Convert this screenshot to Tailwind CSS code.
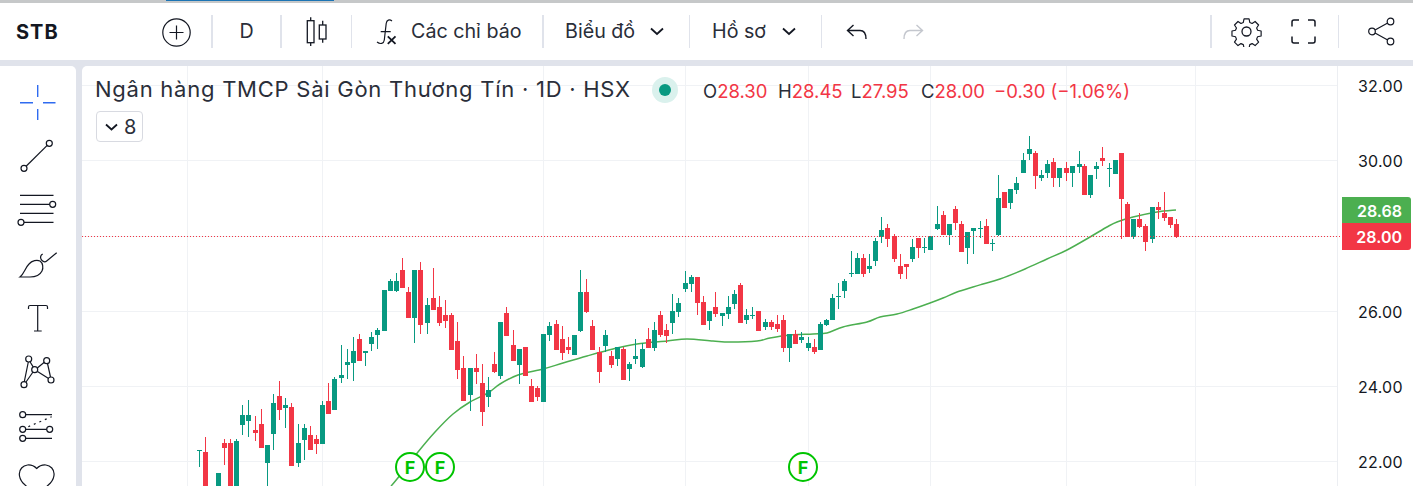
<!DOCTYPE html>
<html lang="vi">
<head>
<meta charset="utf-8">
<script src="https://cdn.jsdelivr.net/npm/@tailwindcss/browser@4"></script>
</head>
<body class="bg-white">
<div class="w-[1413px] h-[486px] overflow-hidden flex flex-col bg-[#e0e3eb] font-['Inter',sans-serif] text-[#131722]">
  <div class="h-[3px] shrink-0 bg-[#c6c8c9] flex items-start pl-[166px]"><div class="w-[168px] h-[1px] bg-[#1c74b4]"></div></div>

  <header class="h-[57px] shrink-0 bg-white flex items-center text-[19.7px] text-[#2a2e39]">
    <div class="w-[162px] pl-[16px] font-bold text-[20px] tracking-[1px] text-[#131722]">STB</div>
    <svg class="w-[29px] h-[29px] mt-[2px]" viewBox="0 0 29 29" fill="none" stroke="#131722" stroke-width="1.2"><circle cx="14.5" cy="14.5" r="13.7"/><path d="M14.5 7.5v14M7.5 14.5h14"/></svg>
    <div class="w-[2px] h-[33px] bg-[#e0e3eb] ml-[20px]"></div>
    <div class="w-[67px] text-center">D</div>
    <div class="w-[2px] h-[33px] bg-[#e0e3eb]"></div>
    <svg class="w-[22px] h-[30px] ml-[24px]" viewBox="0 0 22 30" fill="none" stroke="#131722" stroke-width="1.3"><path d="M4.700 .3v3.400M4.700 25.700V29M16.700 3.700V8M16.700 22v3.700"/><rect x="1.300" y="3.700" width="6.700" height="22"/><rect x="13.300" y="8" width="6.700" height="14"/></svg>
    <div class="w-[1px] h-[33px] bg-[#e0e3eb] ml-[23px]"></div>
    <svg class="w-[21px] h-[28px] ml-[24px]" viewBox="0 0 21 28" fill="none" stroke="#131722" stroke-width="1.200"><path d="M16 3C13.500 1 10.700 1.800 10.200 5.500L8.300 22c-.5 3.800-4 4.500-7.300 2M4.700 13.700h10"/><path d="M11.800 18.300l7.700 7.500M19.500 18.300l-7.700 7.500" stroke-width="1.800"/></svg>
    <div class="ml-[14px] w-[131px]">Các chỉ báo</div>
    <div class="w-[2px] h-[33px] bg-[#e0e3eb]"></div>
    <div class="ml-[21px] w-[85px]">Biểu đồ</div>
    <svg class="w-[14px] h-[9px]" viewBox="0 0 14 9" fill="none" stroke="#131722" stroke-width="1.800"><path d="M1 1.500l6 5.500 6-5.500"/></svg>
    <div class="w-[1px] h-[33px] bg-[#e0e3eb] ml-[25px]"></div>
    <div class="ml-[22px] w-[70px]">Hồ sơ</div>
    <svg class="w-[14px] h-[9px]" viewBox="0 0 14 9" fill="none" stroke="#131722" stroke-width="1.800"><path d="M1 1.500l6 5.500 6-5.500"/></svg>
    <div class="w-[1px] h-[33px] bg-[#e0e3eb] ml-[25px]"></div>
    <svg class="w-[21px] h-[16px] ml-[24px]" viewBox="0 0 21 16" fill="none" stroke="#131722" stroke-width="1.400"><path d="M7.500 1L1.500 6.500l6 5.500M1.500 6.500H14c3.500 0 6 2.500 6 8.500"/></svg>
    <svg class="w-[21px] h-[16px] ml-[36px]" viewBox="0 0 21 16" fill="none" stroke="#c4c7ce" stroke-width="1.400"><path d="M13.500 1l6 5.500-6 5.500M19.500 6.500H7c-3.500 0-6 2.500-6 8.500"/></svg>
    <div class="w-[2px] h-[33px] bg-[#e0e3eb] ml-[286px]"></div>
    <svg class="w-[31px] h-[31px] ml-[19px]" viewBox="0 0 31 31" fill="none" stroke="#131722" stroke-width="1.300"><circle cx="15.500" cy="15.500" r="4.500"/><path d="M12.700 1.500h5.600l.8 3.900 2.600 1.100 3.300-2.200 3.900 3.900-2.200 3.300 1.100 2.600 3.900.8v5.600l-3.900.8-1.100 2.600 2.200 3.300-3.900 3.900-3.300-2.200-2.600 1.100-.8 3.900h-5.600l-.8-3.900-2.600-1.100-3.300 2.200-3.900-3.900 2.200-3.300-1.100-2.600-3.900-.8v-5.600l3.900-.8 1.100-2.600-2.200-3.300 3.900-3.900 3.300 2.200 2.600-1.100z" transform="translate(1.600 1.600) scale(.9)" stroke-linejoin="round"/></svg>
    <svg class="w-[25px] h-[25px] ml-[29px]" viewBox="0 0 25 25" fill="none" stroke="#131722" stroke-width="1.500"><path d="M1 7.500V3a2 2 0 0 1 2-2h5M17 1h5a2 2 0 0 1 2 2v4.500M24 17.500V22a2 2 0 0 1-2 2h-5M8 24H3a2 2 0 0 1-2-2v-4.500"/></svg>
    <div class="w-[1px] h-[33px] bg-[#e0e3eb] ml-[22px]"></div>
    <svg class="w-[27px] h-[29px] ml-[29px]" viewBox="0 0 27 29" fill="none" stroke="#131722" stroke-width="1.200"><circle cx="4" cy="14.500" r="3.300"/><circle cx="22.500" cy="4.500" r="3.300"/><circle cx="22.500" cy="24.500" r="3.300"/><path d="M7 13l12.700-7M7 16l12.700 7"/></svg>
  </header>

  <div class="h-[6px] shrink-0"></div>

  <main class="flex flex-1 gap-[6px] min-h-0">
    <aside class="w-[76px] shrink-0 bg-white rounded-tr-[5px] pt-[9px] flex flex-col">
      <svg class="w-[76px] h-[54px] shrink-0" viewBox="0 75 76 54" fill="none" stroke="#2f6bf0" stroke-width="1.400"><path d="M20 102.700h13M43 102.700h12.500M37.700 85v12M37.700 109v11"/></svg>
      <svg class="w-[76px] h-[54px] shrink-0" viewBox="0 129 76 54" fill="none" stroke="#131722" stroke-width="1.200"><circle cx="49.300" cy="143.300" r="3"/><circle cx="24" cy="168.300" r="3"/><path d="M47.200 145.400L26.100 166.200"/></svg>
      <svg class="w-[76px] h-[54px] shrink-0" viewBox="0 183 76 54" fill="none" stroke="#131722" stroke-width="1.200"><path d="M20 195.300h33.500M20 204.300h29.700M20 213.300h33.500M24 222.300h29.500"/><circle cx="52.700" cy="204.300" r="3"/><circle cx="21" cy="222.300" r="3"/></svg>
      <svg class="w-[76px] h-[54px] shrink-0" viewBox="0 237 76 54" fill="none" stroke="#131722" stroke-width="1.200"><path d="M20 277C24 274 25 268 29 264C32 260.500 37 259.500 40 261C43 263 43.500 268 42 271C39.500 276 35 277 30 277Z"/><path d="M42.700 254C40 255.500 40 258.500 42 260.500C43.500 262 45.500 262 47 260.700L56.700 252.700"/></svg>
      <svg class="w-[76px] h-[54px] shrink-0" viewBox="0 291 76 54" fill="none" stroke="#131722" stroke-width="1.200"><path d="M28.500 309v-2a1.500 1.500 0 0 1 1.500-1.500h16a1.500 1.500 0 0 1 1.500 1.500v2M37.700 305.500v25.500M34 331h7.700"/></svg>
      <svg class="w-[76px] h-[54px] shrink-0" viewBox="0 345 76 54" fill="none" stroke="#131722" stroke-width="1.200"><path d="M28.300 362l-4 19.700M30 361.800l3.300 5.300M26 382l7-10M37.300 368l7-5.700M47.500 363.500l3 13.500M37.500 371.500l10.700 6.800"/><circle cx="28.700" cy="359" r="3"/><circle cx="46.700" cy="360.700" r="3"/><circle cx="34.700" cy="369.700" r="3"/><circle cx="51" cy="380" r="3"/><circle cx="24" cy="384.700" r="3"/></svg>
      <svg class="w-[76px] h-[54px] shrink-0" viewBox="0 399 76 54" fill="none" stroke="#131722" stroke-width="1.200"><path d="M25.700 414.700H52M25.700 429.300h21M25.700 438.300H52"/><path d="M28.300 426.700l23.400-10" stroke-dasharray="2 4"/><circle cx="22.700" cy="414.700" r="3"/><circle cx="22.700" cy="429.300" r="3"/><circle cx="49.700" cy="429.300" r="3"/><circle cx="22.700" cy="438.300" r="3"/></svg>
      <svg class="w-[76px] h-[54px] shrink-0" viewBox="0 453 76 54" fill="none" stroke="#131722" stroke-width="1.200"><path d="M36.700 468.500c-2.500-2.500-6-3.800-9.200-3.500-4.800.5-8.200 4.500-8.200 9 0 3.700 1.500 6.500 3.700 9l13.700 13 13.700-13c2.200-2.500 3.700-5.300 3.700-9 0-4.500-3.400-8.500-8.200-9-3.200-.3-6.700 1-9.200 3.500z"/></svg>
    </aside>

    <section class="relative flex-1 bg-white rounded-tl-[5px] overflow-hidden">
      <svg id="chart" class="absolute inset-0 w-[1331px] h-[420px]" viewBox="82 66 1331 420" fill="none">
        <g stroke="#f0f2f5" stroke-width="1" shape-rendering="crispEdges">
          <path d="M187.500 66V486M322.500 66V486M543.500 66V486M685.500 66V486M808.500 66V486M930.500 66V486M1066.500 66V486M1195.500 66V486"/>
          <path d="M82 85.500H1337M82 160.500H1337M82 236.500H1337M82 311.500H1337M82 386.500H1337M82 461.500H1337"/>
          <path d="M1337.500 66V486" stroke="#eceef2"/>
        </g>
        <path id="ma" stroke="#4caf50" stroke-width="1.500" stroke-linejoin="round"/>
        <g id="candles" shape-rendering="crispEdges"></g>
        <path d="M82 236.500H1340" stroke="#f23645" stroke-width="1" stroke-dasharray="1 2"/>
      </svg>

      <div class="absolute left-[13px] top-[11px] text-[22px] leading-[24px] tracking-[.75px] text-[#2a2e39] whitespace-nowrap">Ngân hàng TMCP Sài Gòn Thương Tín · 1D · HSX</div>
      <div class="absolute left-[570px] top-[11px] w-[26px] h-[26px] rounded-full bg-[#daf1ed] flex items-center justify-center"><div class="w-[12px] h-[12px] rounded-full bg-[#089981]"></div></div>
      <div class="absolute left-[621px] top-[14px] text-[18.5px] leading-[22px] whitespace-nowrap text-[#f23645] flex">
        <span class="w-[75px]"><span class="text-[#2a2e39]">O</span>28.30</span>
        <span class="w-[73px]"><span class="text-[#2a2e39]">H</span>28.45</span>
        <span class="w-[70px]"><span class="text-[#2a2e39]">L</span>27.95</span>
        <span class="w-[73px]"><span class="text-[#2a2e39]">C</span>28.00</span>
        <span>−0.30 (−1.06%)</span>
      </div>
      <div class="absolute left-[14px] top-[45px] w-[47px] h-[31px] rounded-[4px] border border-[#d8dae1] flex items-center pl-[8px] gap-[6px] text-[20px] text-[#2a2e39]">
        <svg class="w-[13px] h-[8px]" viewBox="0 0 13 8" fill="none" stroke="#131722" stroke-width="1.800"><path d="M1 1.500l5.500 5 5.500-5"/></svg>8
      </div>

      <div class="absolute left-[1276px] top-[10px] text-[16px] leading-[20px] tracking-[.2px]">32.00</div>
      <div class="absolute left-[1276px] top-[85px] text-[16px] leading-[20px] tracking-[.2px]">30.00</div>
      <div class="absolute left-[1276px] top-[236px] text-[16px] leading-[20px] tracking-[.2px]">26.00</div>
      <div class="absolute left-[1276px] top-[311px] text-[16px] leading-[20px] tracking-[.2px]">24.00</div>
      <div class="absolute left-[1276px] top-[386px] text-[16px] leading-[20px] tracking-[.2px]">22.00</div>
      <div class="absolute left-[1260px] top-[131px] w-[69px] h-[27px] rounded-tr-[3px] bg-[#4caf50] text-white text-[16px] font-semibold flex items-center justify-end pr-[9px]">28.68</div>
      <div class="absolute left-[1260px] top-[157px] w-[69px] h-[27px] rounded-br-[3px] bg-[#f23645] text-white text-[16px] font-semibold flex items-center justify-end pr-[9px]">28.00</div>

      <div class="absolute left-[313px] top-[386px] w-[30px] h-[30px] rounded-full border-2 border-[#00c400] bg-white text-[#00c400] font-bold text-[18px] flex items-center justify-center">F</div>
      <div class="absolute left-[343px] top-[386px] w-[30px] h-[30px] rounded-full border-2 border-[#00c400] bg-white text-[#00c400] font-bold text-[18px] flex items-center justify-center">F</div>
      <div class="absolute left-[706px] top-[386px] w-[30px] h-[30px] rounded-full border-2 border-[#00c400] bg-white text-[#00c400] font-bold text-[18px] flex items-center justify-center">F</div>
    </section>
  </main>
</div>
<script>
const sets=[
[190,250,`28 g 601 601 604 650|46 r 561 606 800 800|85 g 669 669 800 800|103 r 568 579 594 645|121 r 568 579 800 800|139 g 568 573 800 800|157 g 465 495 525 555|175 g 450 495 513 561|196 r 498 540 549 573|214 r 477 522 594 594|232 g 585 585 639 800|250 g 432 459 552 600|268 r 393 438 480 510|286 g 444 465 474 534|304 r 459 471 648 648|325 g 522 579 639 651|343 g 522 534 570 630|361 r 528 555 600 600|379 r 555 567 582 612|397 g 453 465 582 582|415 r 399 453 492 492|433 g 381 387 480 480|454 g 285 375 384 399|472 g 297 336 345 387|490 g 261 303 339 393|508 r 252 267 333 333|526 g 303 303 309 348|544 g 246 261 282 303|562 g 234 240 255 297|583 g 120 120 243 243|601 g 87 93 123 123|619 g 69 93 123 126|637 r 24 60 114 114|655 r 111 126 204 204|673 g 60 60 204 279|691 r 36 60 225 252|712 g 144 165 219 252|730 r 54 144 180 180|748 r 138 171 219 228|766 r 150 195 213 234|784 r 189 195 300 300|802 r 216 273 360 387|820 r 318 354 453 453|841 g 354 354 435 483|859 r 312 354 366 402|877 r 342 399 486 528|895 g 381 420 441 471`],
[480,250,`43 r 306 342 366 369|61 g 216 216 378 387|79 r 171 189 258 258|100 r 240 285 333 333|118 g 297 297 345 402|136 r 291 291 378 378|154 r 387 408 456 456|172 r 408 414 441 453|190 g 252 252 456 456|208 g 216 228 255 273|229 r 210 222 300 300|247 r 228 267 309 330|265 r 261 291 300 312|283 g 255 255 315 315|301 g 60 126 243 246|319 r 87 126 186 189|337 r 210 228 300 300|358 r 291 306 366 399|376 g 240 255 288 306|394 r 303 318 345 354|412 g 291 291 327 348|430 r 291 297 390 390|448 g 336 342 357 393|466 g 267 318 327 342|487 g 279 297 351 354|505 r 234 267 294 294|523 g 216 240 294 303|541 r 183 195 255 261|559 r 222 240 258 279|577 g 132 183 219 252|595 g 144 159 186 201|616 g 63 99 117 126|634 g 75 81 102 126|652 r 81 81 159 195|670 r 138 156 225 225|688 g 183 183 213 240|706 r 126 171 192 201|727 g 189 189 198 228|745 g 138 171 192 207|763 g 120 132 162 177|781 r 99 105 219 219|799 g 177 195 210 222|817 g 171 195 198 207|835 r 183 183 243 243|856 g 207 216 231 240|874 r 210 216 231 240|892 r 195 222 237 246`],
[770,200,`40 r 345 360 444 456|58 g 402 402 444 486|76 r 390 402 432 432|94 g 396 411 420 429|115 g 411 429 444 453|133 r 417 441 456 462|151 g 366 372 450 450|169 g 357 360 375 378|187 g 282 294 360 360|205 g 249 288 291 327|223 g 237 243 273 294|244 g 153 219 222 231|262 g 159 174 222 222|280 r 162 174 222 231|298 g 162 198 207 219|316 g 114 123 183 198|334 g 51 90 111 129|352 r 72 84 117 141|373 r 102 108 177 186|391 r 162 198 222 237|409 r 192 192 201 237|427 g 117 141 177 186|445 r 114 114 144 174|463 g 114 141 144 159|481 g 108 108 150 150|502 g 18 72 87 90|520 r 33 45 105 105|538 g 72 72 105 135|556 r 18 27 69 90|574 r 63 72 156 156|592 g 96 96 144 192|610 g 84 84 93 162|631 g 63 84 87 114|649 r 57 78 132 132|667 g 117 129 132 153`],
[990,130,`25 g 135 204 315 318|43 r 186 186 234 234|61 g 177 177 219 237|79 g 141 159 180 192|100 g 69 90 129 129|118 g 18 57 72 90|136 r 63 69 138 177|154 g 120 135 144 153|172 g 90 102 129 144|190 r 84 96 144 171|208 g 114 114 144 171|229 r 96 114 129 153|247 g 108 108 129 171|268 g 63 102 111 129|283 r 102 108 195 195|301 g 135 135 195 204|319 g 96 108 117 147|337 r 51 84 93 108|358 g 99 114 117 171|376 g 90 90 132 132|394 r 69 69 207 327|412 r 216 222 321 321|430 g 267 267 321 327|448 r 249 267 291 294|466 r 282 288 336 363|487 g 231 231 327 339|505 r 216 231 240 267|523 r 186 249 264 273|541 r 261 261 285 294|559 r 267 282 321 324`]];
let out='';
for(const [ox,oy,s] of sets){for(const c of s.split('|')){
  const p=c.split(' ');const x=+p[0]/3+ox,col=p[1]=='g'?'#089981':'#f23645';
  const Y=v=>Math.round(+v/3+oy);
  const wt=Y(p[2]),bt=Y(p[3]),bb=Y(p[4]),wb=Y(p[5]);
  const cx=Math.floor(x);
  out+=`<rect x="${cx}" y="${wt}" width="1" height="${Math.max(1,wb-wt)}" fill="${col}"/><rect x="${cx-2}" y="${bt}" width="5" height="${Math.max(1,bb-bt)}" fill="${col}"/>`;
}}
document.getElementById('candles').innerHTML=out;
const P=[[391,486],[397,479],[418,452],[435,432],[453,414],[470,402],[488,393],[500,384],[518,375],[543,369],[563,363],[587,356],[613,349],[637,344],[667,341],[687,339],[713,341],[730,342],[757,341],[770,338],[790,335],[813,334],[827,333],[843,327],[867,322],[880,317],[897,314],[913,309],[930,303],[943,298],[957,292],[973,287],[983,284],[1000,279],[1025,269],[1047,259],[1067,250],[1090,237],[1107,227],[1117,222],[1133,217],[1157,212],[1176,210]];
let d=`M${P[0]}`;
for(let i=0;i<P.length-1;i++){
  const a=P[Math.max(i-1,0)],b=P[i],c=P[i+1],e=P[Math.min(i+2,P.length-1)];
  d+=`C${b[0]+(c[0]-a[0])/6} ${b[1]+(c[1]-a[1])/6} ${c[0]-(e[0]-b[0])/6} ${c[1]-(e[1]-b[1])/6} ${c[0]} ${c[1]}`;
}
document.getElementById('ma').setAttribute('d',d);
</script>
</body>
</html>
